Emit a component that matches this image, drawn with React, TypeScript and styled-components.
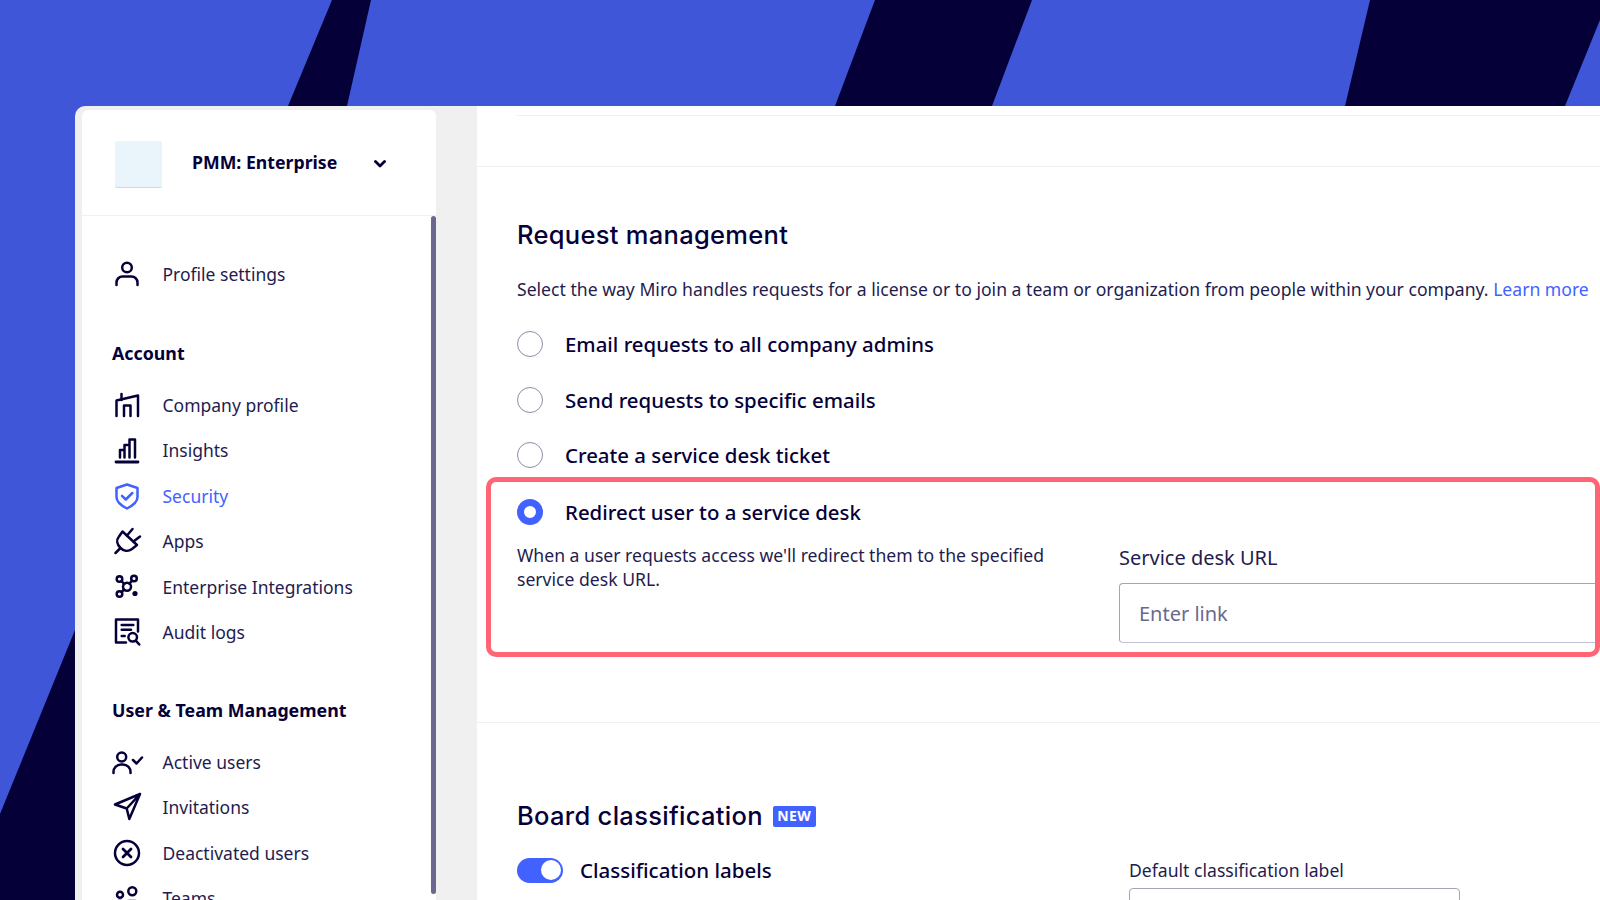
import React from "react";
import styled, { createGlobalStyle } from "styled-components";

const ink = "#050038";
const text = "#1f1c4f";
const accent = "#4262ff";

const GlobalStyle = createGlobalStyle`
  html, body {
    margin: 0;
    width: 1600px;
    height: 900px;
    overflow: hidden;
    background: #3f56d9;
  }
  * { box-sizing: border-box; }
`;

const Page = styled.div`
  position: relative;
  width: 1600px;
  height: 900px;
  overflow: hidden;
  padding: 106px 0 0 75px;
  font-family: "Noto Sans", "Open Sans", sans-serif;
  color: ${text};
`;

const Backdrop = styled.svg`
  position: absolute;
  inset: 0;
`;

const Frame = styled.div`
  position: relative;
  display: flex;
  width: 1525px;
  height: 794px;
  padding: 4px 0 0 7px;
  background: #f0f0f0;
  border-radius: 10px 0 0 0;
  overflow: hidden;
`;

const Sidebar = styled.aside`
  width: 354px;
  height: 900px;
  flex-shrink: 0;
  background: #fff;
  border-radius: 6px 6px 0 0;
`;

const Workspace = styled.div`
  display: flex;
  align-items: center;
  height: 106px;
  padding: 0 0 0 33px;
  border-bottom: 1px solid #f0f0f0;
`;

const Logo = styled.div`
  width: 47px;
  height: 47px;
  margin-top: 3px;
  border-radius: 2px;
  background: #e9f5fa;
  border-bottom: 1px solid #d8d8cc;
`;

const WorkspaceName = styled.div`
  width: 182px;
  margin-left: 30px;
  margin-top: -1px;
  font-size: 17.7px;
  font-weight: 700;
  color: ${ink};
`;

const Chevron = styled.svg`
  margin-top: 3px;
`;

const SideBody = styled.div`
  position: relative;
  height: 680px;
  padding: 36px 0 0 30px;
`;

const Scrollbar = styled.div`
  position: absolute;
  top: 0;
  right: 0;
  width: 5px;
  height: 678px;
  border-radius: 3px;
  background: #6b6890;
`;

const NavItem = styled.div<{ $active?: boolean }>`
  display: flex;
  align-items: center;
  height: 45.5px;
  padding-bottom: 1px;
  font-size: 17.5px;
  color: ${(p) => (p.$active ? accent : text)};
`;

const NavIcon = styled.span`
  display: flex;
  align-items: center;
  justify-content: center;
  width: 30px;
  margin-right: 20.5px;
`;

const NavTitle = styled.div<{ $gap: number }>`
  margin: ${(p) => p.$gap}px 0 17px;
  font-size: 17.8px;
  line-height: 26px;
  font-weight: 700;
  color: ${ink};
`;

const Main = styled.main`
  margin-left: 41px;
  width: 1123px;
  height: 900px;
  flex-shrink: 0;
  background: #fff;
  margin-top: -4px;
`;

const TopStub = styled.div`
  height: 61px;
  padding: 9px 0 0 40px;
  border-bottom: 1px solid #f0f0f0;
`;

const StubLine = styled.div`
  height: 1px;
  background: #f0f0f0;
`;

const Section = styled.section`
  padding: 51px 0 0 40px;
  height: 556px;
  border-bottom: 1px solid #f0f0f0;
`;

const Heading = styled.h2`
  display: flex;
  align-items: center;
  gap: 10px;
  margin: 0;
  font-family: Inter, sans-serif;
  font-size: 25.5px;
  line-height: 34px;
  font-weight: 500;
  letter-spacing: 0.3px;
  color: ${ink};
`;

const Lead = styled.p`
  margin: 25px 0 16px;
  font-size: 17.6px;
  line-height: 24px;
  white-space: nowrap;
`;

const LearnMore = styled.a`
  color: ${accent};
`;

const RadioRow = styled.label`
  display: flex;
  align-items: center;
  height: 55.5px;
  padding-bottom: 1px;
  font-size: 20.4px;
  font-weight: 500;
  color: ${ink};
`;

const Radio = styled.span<{ $on?: boolean }>`
  width: 26px;
  height: 26px;
  margin-right: 22px;
  border-radius: 50%;
  background: #fff;
  border: ${(p) => (p.$on ? `7.5px solid ${accent}` : "1px solid #8f8da8")};
`;

const Highlight = styled.div`
  position: relative;
  margin: -7px 0 0 -31px;
  height: 180px;
  padding: 3px 0 0 26px;
  border: 5px solid #ff6575;
  border-radius: 10px;
  overflow: hidden;
`;

const HighlightRow = styled.div`
  display: flex;
  padding-top: 0;
`;

const HelpText = styled.p`
  width: 560px;
  margin: 0 42px 0 0;
  flex-shrink: 0;
  padding-top: 4px;
  font-size: 17.6px;
  line-height: 23.5px;
`;

const Field = styled.div`
  flex: 1;
  padding-top: 4px;
`;

const FieldLabel = styled.div`
  font-size: 20px;
  line-height: 28px;
  margin-bottom: 11px;
`;

const Input = styled.div`
  display: flex;
  align-items: center;
  width: 600px;
  height: 60px;
  padding-left: 19px;
  border: 1px solid #a5a3bc;
  border-bottom-color: #c2c1d4;
  border-radius: 4px;
  font-size: 20px;
  color: #6b6890;
`;

const Lower = styled.section`
  display: flex;
  padding: 76px 0 0 40px;
`;

const LowerLeft = styled.div`
  width: 612px;
  flex-shrink: 0;
`;

const Badge = styled.span`
  display: inline-flex;
  align-items: center;
  justify-content: center;
  width: 43px;
  height: 21px;
  border-radius: 2px;
  background: ${accent};
  color: #fff;
  font-family: "Noto Sans", sans-serif;
  font-size: 14px;
  font-weight: 700;
  letter-spacing: 0.4px;
`;

const ToggleRow = styled.div`
  display: flex;
  align-items: center;
  gap: 17px;
  margin-top: 23px;
  font-size: 20.5px;
  font-weight: 500;
  color: ${ink};
`;

const Toggle = styled.span`
  display: flex;
  justify-content: flex-end;
  align-items: center;
  width: 46px;
  height: 25px;
  padding-right: 2.5px;
  border-radius: 13px;
  background: ${accent};

  &::after {
    content: "";
    width: 20px;
    height: 20px;
    border-radius: 50%;
    background: #fff;
  }
`;

const LowerField = styled.div`
  padding-top: 59px;
  font-size: 17.6px;
  line-height: 24px;
`;

const SelectBox = styled.div`
  width: 331px;
  height: 60px;
  margin-top: 6px;
  border: 1px solid #a5a3bc;
  border-radius: 4px;
`;

const Ico = ({ children, color = ink }: { children: React.ReactNode; color?: string }) => (
  <svg width={30} height={30} viewBox="0 0 30 30" fill="none" stroke={color} strokeWidth={2.5} strokeLinecap="round" strokeLinejoin="round" overflow="visible">
    {children}
  </svg>
);

const icons: Record<string, React.ReactNode> = {
  profile: (
    <>
      <circle cx="15" cy="8.5" r="4.8" />
      <path d="M4.5 26v-2.5a6 6 0 0 1 6-6h9a6 6 0 0 1 6 6V26" />
    </>
  ),
  company: (
    <>
      <path d="M4.500 26V10.500l21.500-5V26" />
      <path d="M9.500 4v6" />
      <path d="M12 26V15.500h6.500V26" />
    </>
  ),
  insights: (
    <>
      <path d="M4 27h22" strokeWidth="2.8" />
      <path d="M8 22.500V15h4.500M12.500 22.500V10h5M17.500 22.500V4.500h5.500v18" />
    </>
  ),
  shield: (
    <>
      <path d="M15 3.500 25.500 7v9c0 5.500-4.500 8.500-10.500 11.500C9 24.500 4.500 21.500 4.500 16V7z" />
      <path d="m10 14.800 3.800 3.700 6.500-6.500" />
    </>
  ),
  plug: (
    <>
      <path d="M3.500 27l5-5" />
      <path d="M10.500 5.500 25 19l-5 4c-4 3-8.500 2-11.500-1C5 18.500 4 14 7 10.500z" />
      <path d="m15 9.500 5.500-6.500M21.500 15.500l6.500-5" />
    </>
  ),
  nodes: (
    <>
      <circle cx="15" cy="14.800" r="4" />
      <circle cx="7.500" cy="7" r="2.800" />
      <circle cx="22" cy="6.500" r="2.800" />
      <circle cx="7.500" cy="22" r="2.800" />
      <circle cx="23" cy="21.500" r="2.600" fill={ink} stroke="none" />
      <path d="m9.500 9 2.700 3M20 8.500l-2.500 3.300M9.500 20l2.700-2.500" />
    </>
  ),
  audit: (
    <>
      <path d="M14 25.500H4v-23h22v12" />
      <path d="M9.700 8h11.600M9.700 12.700H19M9.700 19h3" />
      <circle cx="20.700" cy="20.300" r="4.300" />
      <path d="m24 23.800 3.300 3.700" />
    </>
  ),
  activeUser: (
    <>
      <circle cx="9.700" cy="10" r="4.500" />
      <path d="M1.500 26v-1a7.500 7.500 0 0 1 7.500-7.500h2a7.500 7.500 0 0 1 7.500 7.500v1" />
      <path d="m21 13 3.500 3.500 5.500-6" />
    </>
  ),
  send: <path d="M28 2 3 12.500l11.700 4L17.300 27zM14.700 16.500 28 2" />,
  deactivated: (
    <>
      <circle cx="15" cy="15" r="12" />
      <path d="m11 11 8 8M19 11l-8 8" strokeWidth="2.800" />
    </>
  ),
  teams: (
    <>
      <circle cx="8" cy="11.700" r="3" />
      <circle cx="20.300" cy="8.300" r="4" />
      <path d="M3 24v-2a4 4 0 0 1 4-4h2M12 26v-3a5 5 0 0 1 5-5h6a5 5 0 0 1 5 5v3" />
    </>
  ),
};

type Item = { label: string; icon: string; active?: boolean };

const accountItems: Item[] = [
  { label: "Company profile", icon: "company" },
  { label: "Insights", icon: "insights" },
  { label: "Security", icon: "shield", active: true },
  { label: "Apps", icon: "plug" },
  { label: "Enterprise Integrations", icon: "nodes" },
  { label: "Audit logs", icon: "audit" },
];

const teamItems: Item[] = [
  { label: "Active users", icon: "activeUser" },
  { label: "Invitations", icon: "send" },
  { label: "Deactivated users", icon: "deactivated" },
  { label: "Teams", icon: "teams" },
];

const Nav = ({ item }: { item: Item }) => (
  <NavItem $active={item.active}>
    <NavIcon>
      <Ico color={item.active ? accent : ink}>{icons[item.icon]}</Ico>
    </NavIcon>
    {item.label}
  </NavItem>
);

export default function App() {
  return (
    <Page>
      <GlobalStyle />
      <Backdrop width="1600" height="900" viewBox="0 0 1600 900">
        <polygon fill={ink} points="332,0 371,0 347,106 288,106" />
        <polygon fill={ink} points="875,0 1032,0 992,106 835,106" />
        <polygon fill={ink} points="1370,0 1600,0 1600,20 1565,106 1345,106" />
        <polygon fill={ink} points="0,814 75,630 75,900 0,900" />
      </Backdrop>
      <Frame>
        <Sidebar>
          <Workspace>
            <Logo />
            <WorkspaceName>PMM: Enterprise</WorkspaceName>
            <Chevron width="12" height="8" viewBox="0 0 12 8" fill="none" stroke={ink} strokeWidth="2.8" strokeLinecap="round" strokeLinejoin="round">
              <path d="m1.500 1.500 4.500 4.500 4.500-4.500" />
            </Chevron>
          </Workspace>
          <SideBody>
            <Scrollbar />
            <Nav item={{ label: "Profile settings", icon: "profile" }} />
            <NavTitle $gap={42}>Account</NavTitle>
            {accountItems.map((item) => (
              <Nav key={item.label} item={item} />
            ))}
            <NavTitle $gap={41}>User &amp; Team Management</NavTitle>
            {teamItems.map((item) => (
              <Nav key={item.label} item={item} />
            ))}
          </SideBody>
        </Sidebar>
        <Main>
          <TopStub>
            <StubLine />
          </TopStub>
          <Section>
            <Heading>Request management</Heading>
            <Lead>
              Select the way Miro handles requests for a license or to join a team or organization from people within your company.{" "}
              <LearnMore>Learn more</LearnMore>
            </Lead>
            <RadioRow>
              <Radio />
              Email requests to all company admins
            </RadioRow>
            <RadioRow>
              <Radio />
              Send requests to specific emails
            </RadioRow>
            <RadioRow>
              <Radio />
              Create a service desk ticket
            </RadioRow>
            <Highlight>
              <RadioRow>
                <Radio $on />
                Redirect user to a service desk
              </RadioRow>
              <HighlightRow>
                <HelpText>When a user requests access we'll redirect them to the specified service desk URL.</HelpText>
                <Field>
                  <FieldLabel>Service desk URL</FieldLabel>
                  <Input>Enter link</Input>
                </Field>
              </HighlightRow>
            </Highlight>
          </Section>
          <Lower>
            <LowerLeft>
              <Heading>
                Board classification
                <Badge>NEW</Badge>
              </Heading>
              <ToggleRow>
                <Toggle />
                Classification labels
              </ToggleRow>
            </LowerLeft>
            <LowerField>
              Default classification label
              <SelectBox />
            </LowerField>
          </Lower>
        </Main>
      </Frame>
    </Page>
  );
}
